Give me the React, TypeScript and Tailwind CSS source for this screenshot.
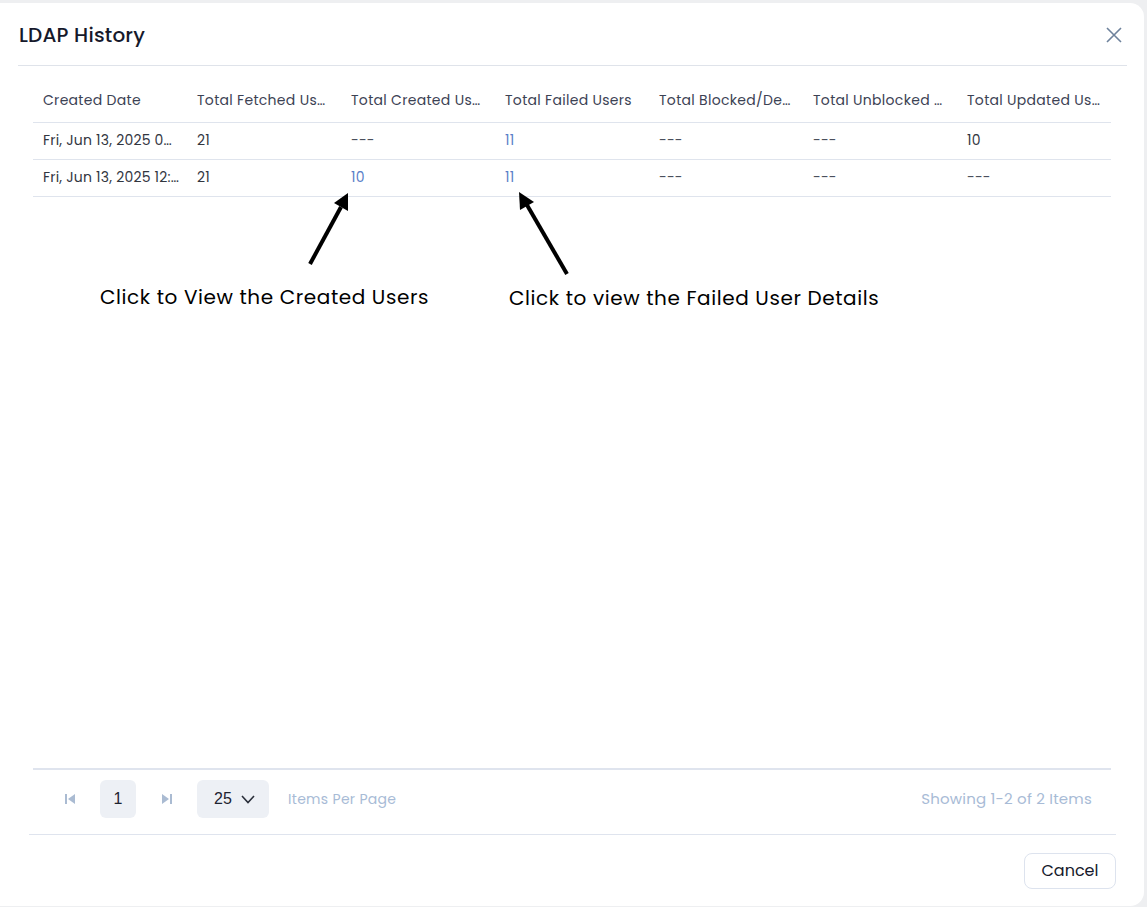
import React from "react";

const columns = [
    "Created Date",
    "Total Fetched Users",
    "Total Created Users",
    "Total Failed Users",
    "Total Blocked/Deleted Users",
    "Total Unblocked Users",
    "Total Updated Users",
];

type Cell = { text: string; link?: boolean; muted?: boolean };

const rows: Cell[][] = [
    [
        { text: "Fri, Jun 13, 2025 05:30 PM" },
        { text: "21" },
        { text: "---", muted: true },
        { text: "11", link: true },
        { text: "---", muted: true },
        { text: "---", muted: true },
        { text: "10" },
    ],
    [
        { text: "Fri, Jun 13, 2025 12:10 PM" },
        { text: "21" },
        { text: "10", link: true },
        { text: "11", link: true },
        { text: "---", muted: true },
        { text: "---", muted: true },
        { text: "---", muted: true },
    ],
];

const font = { fontFamily: '"Poppins", "Inter", "Noto Sans", sans-serif' };
const arial = { fontFamily: '"Liberation Sans", Arial, sans-serif' };

const FirstPageIcon = () => (
    <svg width="12" height="12" viewBox="0 0 12 12" fill="#aabbd2">
        <rect x="1" y="1" width="2" height="10" />
        <path d="M11 1 L4 6 L11 11 Z" />
    </svg>
);

const LastPageIcon = () => (
    <svg width="12" height="12" viewBox="0 0 12 12" fill="#aabbd2">
        <path d="M1 1 L8 6 L1 11 Z" />
        <rect x="9" y="1" width="2" height="10" />
    </svg>
);

const App = () => {
    return (
        <div className="w-[1147px] h-[907px] bg-[#eeeff1] pt-[3px] pr-[3px] pb-[1px]" style={font}>
            <div className="relative h-full bg-white rounded-r-[14px] flex flex-col">
                {/* Header */}
                <div className="flex items-center justify-between h-[62px] pl-[19px] pr-[21px] pt-[1px]">
                    <h1 className="text-[20px] font-medium text-[#16192b] tracking-[0.2px]">LDAP History</h1>
                    <svg width="18" height="18" viewBox="0 0 18 18" stroke="#6e829c" strokeWidth="1.6" fill="none">
                        <path d="M2 2 L16 16 M16 2 L2 16" />
                    </svg>
                </div>
                <div className="ml-[18px] mr-[17px] border-t border-[#dfe3ea]" />

                {/* Table */}
                <div className="flex-1 mx-[33px] mt-[13px]">
                    <table className="w-full table-fixed border-collapse text-[14px]">
                        <thead>
                            <tr className="h-[43px] border-b border-[#dfe4ed]">
                                {columns.map((c) => (
                                    <th key={c} className="pl-[10px] pr-[10px] text-left font-normal text-[#3c4254] tracking-[0.3px] truncate">
                                        {c}
                                    </th>
                                ))}
                            </tr>
                        </thead>
                        <tbody>
                            {rows.map((row, i) => (
                                <tr key={i} className="h-[37px] border-b border-[#dfe4ed]">
                                    {row.map((cell, j) => (
                                        <td
                                            key={j}
                                            className={
                                                "pl-[10px] pr-[8px] tracking-[0.2px] truncate " +
                                                (cell.link
                                                    ? "text-[#5a80c8]"
                                                    : cell.muted
                                                    ? "text-[#4a4f5c]"
                                                    : "text-[#32363f]")
                                            }
                                        >
                                            {cell.text}
                                        </td>
                                    ))}
                                </tr>
                            ))}
                        </tbody>
                    </table>
                </div>

                {/* Annotations */}
                <svg className="absolute left-0 top-0 pointer-events-none" width="1144" height="320" viewBox="0 0 1144 320">
                    <g stroke="#000" strokeWidth="4" fill="#000">
                        <line x1="310" y1="261" x2="341" y2="204" />
                        <line x1="567" y1="271" x2="527" y2="202" />
                    </g>
                    <path d="M348 190 L348 208 L334 200 Z" fill="#000" />
                    <path d="M519 189 L534 199 L520 207 Z" fill="#000" />
                </svg>
                <div className="absolute left-[100px] top-[279px] text-[20px] text-black tracking-[0.6px]">
                    Click to View the Created Users
                </div>
                <div className="absolute left-[509px] top-[280px] text-[20px] text-black tracking-[0.6px]">
                    Click to view the Failed User Details
                </div>

                {/* Pagination */}
                <div className="mx-[33px] border-t-2 border-[#dfe4ee] h-[66px] pb-[6px] flex items-center pl-[31px] pr-[19px]">
                    <div className="flex items-center">
                        <FirstPageIcon />
                        <div className="ml-[24px] w-[36px] h-[38px] rounded-md bg-[#edf0f5] flex items-center justify-center text-[16px] text-[#1d2330]" style={arial}>
                            1
                        </div>
                        <div className="ml-[25px]">
                            <LastPageIcon />
                        </div>
                        <div className="ml-[24px] w-[72px] h-[38px] rounded-md bg-[#edf0f5] flex items-center pl-[17px] gap-[9px] text-[16px] text-[#1d2330]" style={arial}>
                            <span>25</span>
                            <svg width="14" height="9" viewBox="0 0 14 9" fill="none" stroke="#2a2f3a" strokeWidth="1.6">
                                <path d="M1 1 L7 7.5 L13 1" />
                            </svg>
                        </div>
                        <span className="ml-[19px] text-[14px] text-[#a8bbd6] tracking-[0.3px]">Items Per Page</span>
                    </div>
                    <span className="ml-auto text-[15px] text-[#a8bbd6] tracking-[0.2px]">Showing 1-2 of 2 Items</span>
                </div>
                <div className="ml-[29px] mr-[28px] border-t border-[#dfe4ee]" />

                {/* Footer */}
                <div className="h-[71px] flex items-center justify-end pr-[28px]">
                    <button className="w-[92px] h-[36px] rounded-lg border border-[#dde3ee] bg-white text-[16px] text-[#16192b]">
                        Cancel
                    </button>
                </div>
            </div>
        </div>
    );
};

export default App;
